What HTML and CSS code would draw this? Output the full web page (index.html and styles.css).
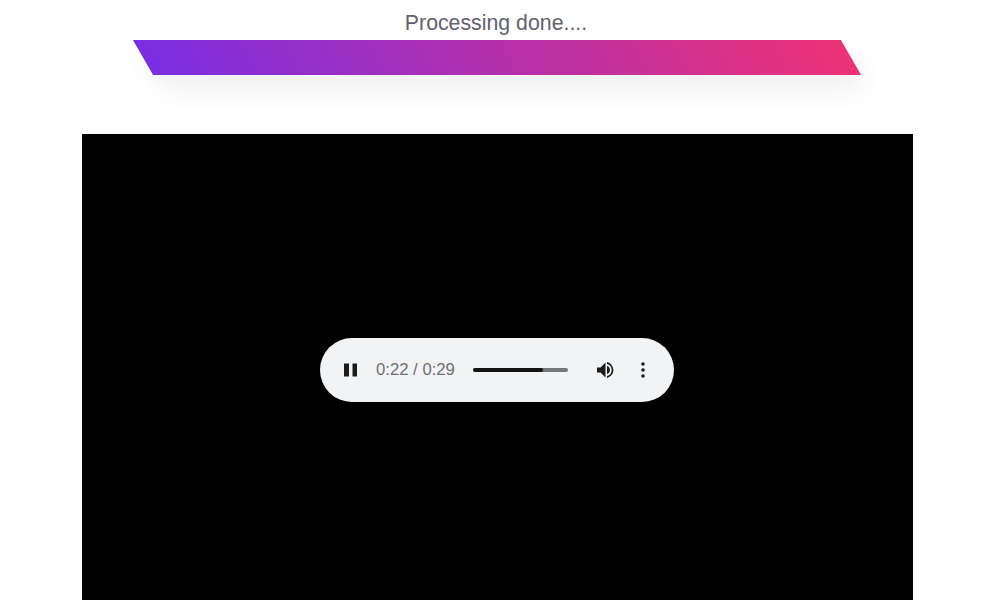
FILE: index.html
```html
<!DOCTYPE html>
<html lang="en">
<head>
  <meta charset="UTF-8">
  <meta name="viewport" content="width=device-width, initial-scale=1.0">
  <title>Processing</title>
  <link rel="stylesheet" href="styles.css">
</head>
<body>

<div class="page">
  <div class="status">
    <div class="status-text">Processing done....</div>
    <div class="status-bar"></div>
  </div>

  <!-- Video area with the audio controls on top -->
  <div class="video">
    <div class="player">
      <svg class="icon-pause" width="24" height="24" viewBox="0 0 24 24">
        <path d="M5 5.500h5v13H5zM13.500 5.500h4.500v13h-4.500z" fill="#1c1c1c"/>
      </svg>
      <div class="player-time">0:22 / 0:29</div>
      <div class="player-track">
        <div class="player-fill" style="width: 74%"></div>
      </div>
      <svg class="icon-volume" width="24" height="24" viewBox="0 0 24 24">
        <path d="M4 9.500v5h3.500l5 5V4.500l-5 5H4zM14 8v8a4.200 4.200 0 0 0 0-8zM14 4v2a6.200 6.200 0 0 1 0 12v2a8.200 8.200 0 0 0 0-16z" fill="#1c1c1c"/>
      </svg>
      <svg class="icon-more" width="24" height="24" viewBox="0 0 24 24">
        <circle cx="12" cy="6" r="1.800" fill="#1c1c1c"/>
        <circle cx="12" cy="12" r="1.800" fill="#1c1c1c"/>
        <circle cx="12" cy="18" r="1.800" fill="#1c1c1c"/>
      </svg>
    </div>
  </div>
</div>

</body>
</html>
```

FILE: styles.css
```css
html, body {
  height: 100%;
  margin: 0;
  overflow: hidden;
}

body {
  font-family: "Liberation Sans", Arial, sans-serif;
  background-color: #fff;
}

.page {
  display: flex;
  flex-direction: column;
  align-items: center;
  padding-left: 82px;
  padding-right: 87px;
}

.status {
  width: 100%;
  display: flex;
  flex-direction: column;
  align-items: center;
  height: 134px;
}

.status-text {
  margin-top: 11px;
  margin-right: 3px;
  font-size: 21.300px;
  line-height: 24px;
  color: #62626e;
  height: 29px;
}

.status-bar {
  width: 708px;
  height: 35px;
  margin-right: 2px;
  transform: skewX(30deg);
  background: linear-gradient(90deg, #7a2ee2, #ec3276);
  box-shadow: 0 15px 22px rgba(60, 80, 90, 0.08);
}

.video {
  width: 100%;
  height: 472px;
  flex-shrink: 0;
  background-color: #000;
  display: flex;
  justify-content: center;
  align-items: center;
}

.player {
  width: 354px;
  height: 64px;
  margin-right: 1px;
  box-sizing: border-box;
  border-radius: 32px;
  background-color: #f1f3f4;
  display: flex;
  align-items: center;
  padding-left: 19px;
}

.icon-pause {
  width: 24px;
  height: 24px;
}

.player-time {
  margin-left: 13px;
  width: 97px;
  font-size: 16.700px;
  color: #6c7074;
}

.player-track {
  width: 95px;
  height: 4px;
  border-radius: 2px;
  background-color: #77787a;
}

.player-fill {
  height: 100%;
  border-radius: 2px;
  background-color: #141414;
}

.icon-volume {
  margin-left: 25px;
  width: 24px;
  height: 24px;
}

.icon-more {
  margin-left: 14px;
  width: 24px;
  height: 24px;
}
```
